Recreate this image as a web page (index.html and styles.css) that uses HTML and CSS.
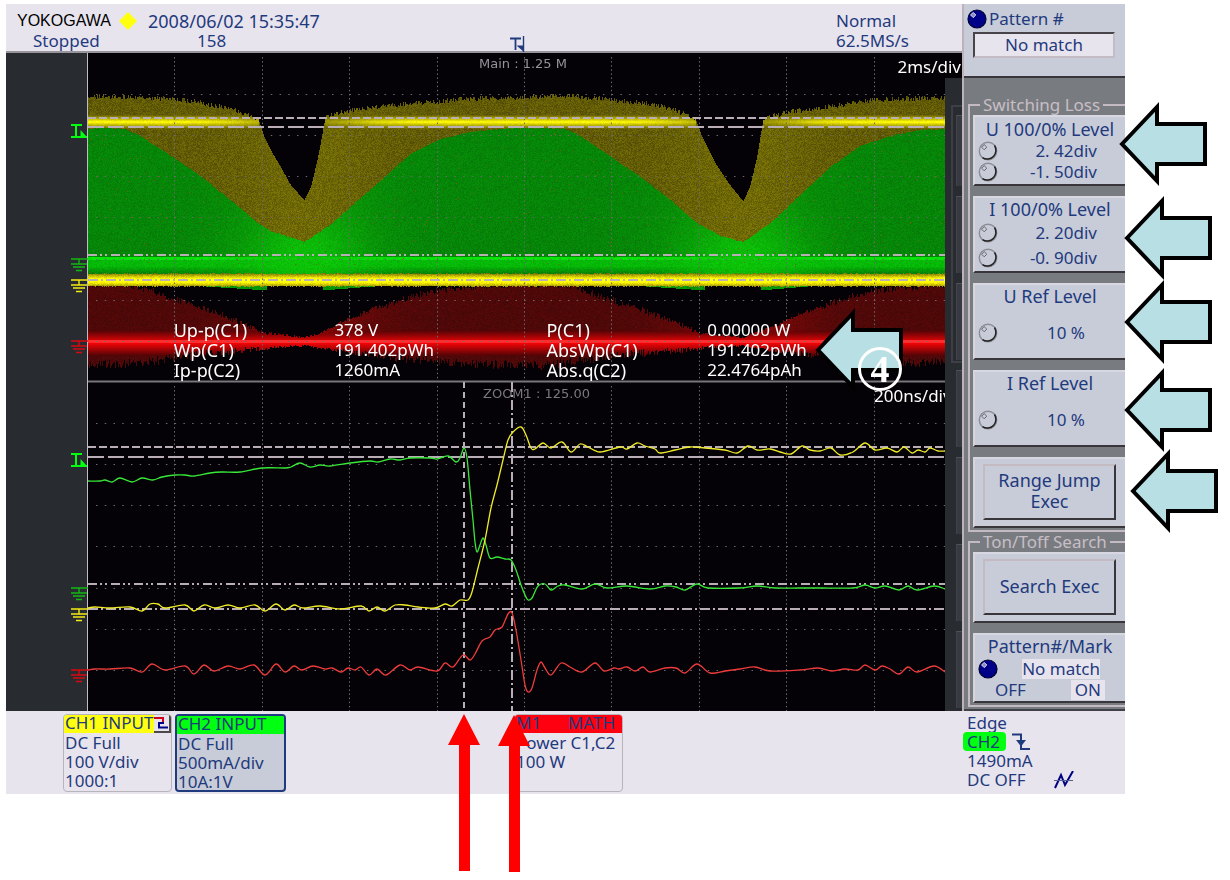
FILE: index.html
```html
<!DOCTYPE html>
<html lang="en">
<head>
<meta charset="utf-8">
<title>YOKOGAWA – Switching Loss</title>
<link rel="stylesheet" href="styles.css">
</head>
<body>
<svg class="defs" aria-hidden="true">
  <symbol id="callout" viewBox="0 0 88 86" overflow="visible">
    <polygon points="2,43 37,6 37,23 85,23 85,63 37,63 37,80" fill="#b8e0e4" stroke="#000" stroke-width="4" stroke-miterlimit="8"/>
  </symbol>
  <symbol id="knob" viewBox="0 0 20 20">
    <circle cx="10" cy="10" r="8.7" fill="none" stroke="#8c8c94" stroke-width="1.4"/>
    <path d="M16.5 4.500A8.700 8.700 0 0 1 4.500 16.600" fill="none" stroke="#222" stroke-width="1.500"/>
    <path d="M6.200 3.600L8.800 6.200L6.200 8.800L3.600 6.200Z" fill="none" stroke="#66666e" stroke-width="1"/>
  </symbol>
  <symbol id="ball" viewBox="0 0 20 20">
    <circle cx="10" cy="10" r="9" fill="#000088" stroke="#000030" stroke-width="1.200"/>
    <path d="M6.200 3.400L8.800 6L6.200 8.600L3.600 6Z" fill="#8c8cc0" stroke="#e0e0f4" stroke-width="1"/>
  </symbol>
  <symbol id="ground" viewBox="0 0 18 14">
    <path d="M1 1H18M9 1V6M1 6H17M3 9H15M6 12.500H12" fill="none" stroke="currentColor" stroke-width="1.400"/>
  </symbol>
  <symbol id="trigger" viewBox="0 0 18 14">
    <path d="M1 1H12M1 13H17M6 1V13" fill="none" stroke="currentColor" stroke-width="2"/>
    <path d="M10.500 6L17 13H10.500Z" fill="currentColor"/>
  </symbol>
</svg>

<main class="page">
  <div class="device">
    <div class="upper">
      <section class="left">
        <header class="status">
          <div class="brand">
            <span class="logo">YOKOGAWA</span>
            <svg class="diamond" viewBox="0 0 18 18"><path d="M9 0L18 9L9 18L0 9Z" fill="#ffff10"/></svg>
            <time>2008/06/02 15:35:47</time>
          </div>
          <div class="state"><span class="run">Stopped</span><span>158</span></div>
          <div class="mode">Normal<br>62.5MS/s</div>
          <svg class="tmark" viewBox="0 0 15 16"><path d="M0 2.500H11M5.500 2V14" fill="none" stroke="#1f3a7d" stroke-width="1.800"/><path d="M13.500 0V16" stroke="#1f3a7d" stroke-width="1.400"/><path d="M6.500 9.500H14V16Z" fill="#1f3a7d"/></svg>
        </header>
        <div class="scope">
          <svg class="gutter" viewBox="6 53 82 658" preserveAspectRatio="xMaxYMin meet">
            <path d="M87.500 53V711" stroke="#c0bcc4"/>
            <g color="#00ff10"><use href="#trigger" x="70" y="124" width="18" height="14"/><use href="#trigger" x="70" y="453" width="18" height="14"/></g>
            <g color="#10b810"><use href="#ground" x="70" y="258" width="18" height="14"/><use href="#ground" x="70" y="587" width="18" height="14"/></g>
            <g color="#f4ec10"><use href="#ground" x="70" y="279" width="18" height="14"/><use href="#ground" x="70" y="608" width="18" height="14"/></g>
            <g color="#d80810"><use href="#ground" x="70" y="340" width="18" height="14"/><use href="#ground" x="70" y="669" width="18" height="14"/></g>
          </svg>
          <div class="plot">
            <canvas id="density" width="857" height="329"></canvas>
            <svg class="traces" viewBox="88 53 857 658" preserveAspectRatio="none">
              <g id="grid" fill="none" stroke="#6c686e" stroke-width="1"></g>
              <path d="M88 381.500H945" stroke="#78767a" stroke-width="2"/>
              <g id="cursors" fill="none" stroke="#b9aeb6" stroke-width="2">
                <path class="short" d="M88 118H945M88 447H945"/>
                <path class="long" d="M88 127H945M88 457H945"/>
                <path class="dashdotdot" d="M88 255H945M88 584H945"/>
                <path class="dashdot" d="M88 280H945M88 609H945"/>
                <path class="vshort" d="M464 382V711"/>
                <path class="dashdot" d="M512 382V711"/>
              </g>
              <g fill="none" stroke-width="1.300">
                <path id="green" stroke="#38e838"/>
                <path id="yellow" stroke="#f0ec28"/>
                <path id="red" stroke="#ee3c3c"/>
              </g>
            </svg>
            <span class="caption main-cap">Main : 1.25 M</span>
            <span class="caption zoom-cap">ZOOM1 : 125.00</span>
            <span class="scale zoom-scale">200ns/div</span>
            <table class="readouts">
              <tr><th>Up-p(C1)</th><td>378 V</td><th>P(C1)</th><td>0.00000 W</td></tr>
              <tr><th>Wp(C1)</th><td>191.402pWh</td><th>AbsWp(C1)</th><td>191.402pWh</td></tr>
              <tr><th>Ip-p(C2)</th><td>1260mA</td><th>Abs.q(C2)</th><td>22.4764pAh</td></tr>
            </table>
          </div>
          <div class="strip">
            <i class="outline"></i>
            <i class="shade first"></i><i class="shade"></i><i class="shade"></i><i class="shade"></i><i class="shade"></i><i class="shade"></i><i class="shade"></i>
          </div>
          <span class="scale main-scale">2ms/div</span>
        </div>
      </section>

      <aside class="menu">
        <div class="pattern">
          <label for="pattern"><svg class="knob"><use href="#ball"/></svg>Pattern #</label>
          <input id="pattern" value="No match" readonly>
        </div>
        <div class="softkeys">
          <fieldset>
            <legend>Switching Loss</legend>
            <button class="key tight"><b>U 100/0% Level</b><span class="row"><svg class="knob"><use href="#knob"/></svg><span>2. 42div</span></span><span class="row"><svg class="knob"><use href="#knob"/></svg><span>-1. 50div</span></span></button>
            <button class="key"><b>I 100/0% Level</b><span class="row"><svg class="knob"><use href="#knob"/></svg><span>2. 20div</span></span><span class="row"><svg class="knob"><use href="#knob"/></svg><span>-0. 90div</span></span></button>
            <button class="key ref"><b>U Ref Level</b><span class="row"><svg class="knob"><use href="#knob"/></svg><span>10 %</span></span></button>
            <button class="key ref"><b>I Ref Level</b><span class="row"><svg class="knob"><use href="#knob"/></svg><span>10 %</span></span></button>
            <div class="key exec"><button>Range Jump<br>Exec</button></div>
          </fieldset>
          <fieldset>
            <legend>Ton/Toff Search</legend>
            <div class="key exec"><button>Search Exec</button></div>
            <button class="key mark"><b>Pattern#/Mark</b><span class="row"><svg class="knob"><use href="#ball"/></svg><span class="lit">No match</span></span><span class="toggle"><span>OFF</span><span class="lit on">ON</span></span></button>
          </fieldset>
        </div>
      </aside>
    </div>

    <footer class="channels">
      <article class="channel ch1">
        <h2>CH1 INPUT<svg class="edge" viewBox="0 0 17 18"><rect width="17" height="18" fill="#4c484c"/><rect width="15" height="16" fill="#e8e4ee"/><path d="M0 3H9V7" fill="none" stroke="#d00018" stroke-width="2"/><path d="M5 8V12.500H14M4 8H10" fill="none" stroke="#000088" stroke-width="2"/></svg></h2>
        <p>DC Full<br>100 V/div<br>1000:1</p>
      </article>
      <article class="channel ch2">
        <h2>CH2 INPUT</h2>
        <p>DC Full<br>500mA/div<br>10A:1V</p>
      </article>
      <article class="channel math">
        <h2><span>M1</span><span>MATH</span></h2>
        <p>Power C1,C2<br>100 W</p>
      </article>
      <div class="trig">
        <span>Edge</span>
        <span class="source"><mark>CH2</mark><svg class="fall" viewBox="0 0 18 18"><path d="M0 1.500H9V16H18" fill="none" stroke="#1f3a7d" stroke-width="2"/><path d="M4 7H14L9 13.500Z" fill="#1f3a7d"/></svg></span>
        <span>1490mA</span>
        <span class="source">DC OFF<svg class="hf" viewBox="0 0 20 18"><path d="M1 17L7 4L11 14L19 0" fill="none" stroke="#000080" stroke-width="2"/><path d="M0 9.500H19" stroke="#506090" stroke-width="1"/></svg></span>
      </div>
    </footer>
  </div>

  <svg class="callout a1"><use href="#callout"/></svg>
  <svg class="callout a2"><use href="#callout"/></svg>
  <svg class="callout a3"><use href="#callout"/></svg>
  <svg class="callout a4"><use href="#callout"/></svg>
  <svg class="callout a5"><use href="#callout"/></svg>
  <svg class="callout a6"><use href="#callout"/></svg>
  <span class="number">4</span>
  <svg class="pointer p1" viewBox="0 0 32 157"><path d="M16 0L32 31H22V157H11V31H0Z" fill="#ff0000"/></svg>
  <svg class="pointer p2" viewBox="0 0 32 157"><path d="M16 0L32 31H22V157H11V31H0Z" fill="#ff0000"/></svg>
</main>
<script src="scope.js"></script>
</body>
</html>
```
FILE: styles.css
```css
* { box-sizing: border-box; }
body { margin: 0; background: #fff; color: #1f3a7d; font: 17px/20px "Noto Sans", sans-serif; }
button, input { font: inherit; color: inherit; }
.defs { position: absolute; width: 0; height: 0; }
.page { position: relative; padding: 4px 105px 86px 6px; min-width: 1000px; }
.device { background: #e8e4ee; }
.upper { display: flex; }
.left { flex: 1; min-width: 0; }

.status { position: relative; height: 49px; padding: 7px 0 0 11px; border-bottom: 2px solid #97949c; }
.brand { display: flex; align-items: center; height: 20px; }
.brand time { font-size: 18px; }
.logo { color: #000; font: 16px/20px "Liberation Sans", sans-serif; width: 102px; }
.diamond { width: 18px; height: 18px; margin-right: 11px; }
.state { display: flex; padding-left: 16px; }
.run { width: 164px; }
.mode { position: absolute; top: 7px; right: 50px; width: 76px; }
.tmark { position: absolute; top: 32px; left: 504px; width: 15px; height: 16px; }

.scope { position: relative; display: flex; height: 658px; background: #040206; }
.gutter { flex: none; width: 82px; height: 658px; background: #282c30; }
.plot { position: relative; flex: 1; min-width: 0; overflow: hidden; }
#density { position: absolute; width: 100%; height: 329px; }
.traces { position: absolute; width: 100%; height: 658px; }
.short { stroke-dasharray: 8 3; }
.long { stroke-dasharray: 16 4; }
.dashdotdot { stroke-dasharray: 9 3 2 3 2 4; }
.dashdot { stroke-dasharray: 10 3 2 3; }
.vshort { stroke-dasharray: 6 4; }
.caption { position: absolute; left: 0; right: 0; text-align: center; color: #96929a; font: 13px/16px "DejaVu Sans", sans-serif; }
.main-cap { top: 3px; padding-left: 13px; }
.zoom-cap { top: 333px; padding-left: 40px; color: #7c787e; }
.scale { position: absolute; color: #fff; white-space: nowrap; }
.main-scale { top: 4px; right: 1px; }
.zoom-scale { top: 333px; left: calc(100% - 71px); }
.readouts { position: absolute; top: 267px; left: 10%; width: 75%; border-collapse: collapse; table-layout: fixed; color: #fff; line-height: 20px; }
.readouts th, .readouts td { padding: 0; height: 20px; text-align: left; font-weight: 400; white-space: nowrap; }
.readouts th { width: 25%; font-size: 18px; }
.readouts td { width: 33%; }
.readouts th + td:last-child { width: 17%; }

.strip { position: relative; width: 17px; margin-top: 25px; background: #282c30; display: flex; flex-direction: column; align-items: flex-end; gap: 10px; overflow: hidden; }
.shade { width: 6px; height: 77px; background: #383a42; border-top: 1px solid #505058; border-left: 1px solid #44424a; }
.first { height: 71px; margin-top: 37px; }
.outline { position: absolute; left: 6px; right: 0; top: 27px; height: 258px; border: 2px solid #3e3e46; border-right: 0; }

.menu { width: 163px; display: flex; flex-direction: column; border-left: 2px solid #bcb2ba; }
.pattern { height: 74px; padding: 5px 9px 0 3px; background: #c8ccd8; border-bottom: 2px solid #38363a; }
.pattern label { display: flex; align-items: center; gap: 2px; }
.pattern input { display: block; width: 142px; height: 26px; margin: 3px 0 0 6px; padding: 0 0 2px; text-align: center; background: #e8e4ee; border: 2px solid; border-color: #48444a #c4bcc4 #c4bcc4 #48444a; border-radius: 0; }
.knob { flex: none; width: 20px; height: 20px; }
.softkeys { flex: 1; padding: 17px 0 0 4px; background: #787c80; border-bottom: 2px solid #404046; }
fieldset { display: flex; flex-direction: column; gap: 10px; min-width: 0; margin: 0; padding: 0 0 2px 3px; border: 2px solid #c4bac2; border-right: 0; }
legend { margin-left: 7px; padding: 0 3px; line-height: 20px; color: #c8bec6; }
.key { display: block; width: 100%; height: 77px; padding: 0; background: #c8ccd8; border: 2px solid; border-color: #d8d8e2 #c8ccd8 #38363a #d8d4dc; border-width: 2px 0 2px 2px; border-radius: 0; text-align: center; white-space: nowrap; }
.key b { display: block; height: 22px; font-size: 18px; font-weight: 400; line-height: 20px; }
.row { display: flex; align-items: center; justify-content: space-between; height: 25px; padding: 0 28px 0 3px; }
.tight { height: 71px; }
.tight .row { height: 21px; }
.ref .row { height: 50px; padding-right: 40px; }
.exec { height: 71px; padding: 5px 9px 6px 8px; }
.exec button { width: 100%; height: 56px; padding: 0 0 2px; font-size: 18px; line-height: 21px; background: #c8ccd8; border: 2px solid; border-color: #c4bac2 #38363a #38363a #c4bac2; border-radius: 0; }
.mark { height: 70px; }
.mark .row { height: 22px; padding-right: 25px; }
.lit { background: #e8e4ee; }
.toggle { display: flex; justify-content: space-between; padding: 0 20px; }
.on { padding: 0 4px; }

.channels { position: relative; display: flex; align-items: flex-start; gap: 3px; height: 83px; padding: 3px 0 0 57px; line-height: 19px; }
.channel { width: 109px; height: 78px; border: 1px solid #b8b4bc; border-radius: 4px; overflow: hidden; white-space: nowrap; }
.channel h2 { display: flex; margin: 0; padding-left: 1px; height: 18px; font: inherit; line-height: 16px; }
.channel p { margin: 0; padding-left: 1px; }
.ch1 h2 { background: #ffff10; justify-content: space-between; }
.edge { width: 17px; height: 18px; }
.ch2 { width: 111px; background: #c8ccd8; border: 2px solid #1f3a7d; }
.ch2 h2 { background: #00ff10; }
.math { margin-left: 225px; }
.math h2 { background: #ff0010; justify-content: space-between; padding-right: 7px; }
.trig { position: absolute; top: 2px; right: 50px; width: 112px; display: flex; flex-direction: column; padding-left: 4px; white-space: nowrap; }
.source { display: flex; align-items: center; }
.trig mark { width: 43px; height: 19px; margin: 0 6px 0 -4px; padding-left: 4px; border-radius: 4px; background: #00ff10; color: inherit; }
.fall { width: 18px; height: 18px; }
.hf { flex: none; width: 20px; height: 18px; margin-left: 28px; }

.callout { position: absolute; width: 88px; height: 86px; overflow: visible; }
.a1 { right: 22px; top: 101px; }
.a2 { right: 17px; top: 195px; }
.a3 { right: 17px; top: 279px; }
.a4 { right: 17px; top: 367px; }
.a5 { right: 11px; top: 448px; }
.a6 { right: 326px; top: 307px; }
.number { position: absolute; right: 328px; top: 347px; width: 44px; height: 44px; border: 3px solid #fff; border-radius: 50%; color: #fff; font: bold 38px/38px "Liberation Serif", serif; text-align: center; }
.pointer { position: absolute; width: 32px; height: 157px; }
.p1 { left: 448px; top: 714px; }
.p2 { left: 498px; top: 715px; }
```
FILE: scope.js
```js
// Seeded generator so the persistence texture is stable between loads.
let seed = 20080602;
function rnd() {
  seed = (seed * 1664525 + 1013904223) >>> 0;
  return seed / 4294967296;
}

function at(points, x) {
  for (let i = 1; i < points.length; i++) {
    if (x <= points[i][0]) {
      const a = points[i - 1], b = points[i];
      return a[1] + (b[1] - a[1]) * (x - a[0]) / (b[0] - a[0]);
    }
  }
  return points[points.length - 1][1];
}

const olive = [[88,96],[150,97],[175,99],[200,102],[230,108],[258,118],[264,137],[270,149],[280,166],[290,184],[304,200],[311,185],[318,155],[325,117],[340,112],[370,107],[400,104],[437,101],[470,98],[520,97],[560,95],[590,97],[640,102],[670,108],[695,118],[702,137],[715,163],[730,185],[743,201],[750,185],[757,155],[763,118],[790,111],[830,106],[870,100],[900,98],[945,97]];
const greenTop = [[88,128],[100,127],[125,128],[140,135],[175,158],[200,175],[230,199],[255,220],[270,230],[304,241],[330,224],[350,206],[380,180],[410,153],[440,138],[470,131],[500,128],[540,127],[565,128],[580,135],[612,157],[640,176],[670,199],[695,221],[720,235],[743,241],[770,222],[800,194],[830,166],[860,145],[890,135],[920,129],[945,128]];
const redTop = [[88,283],[130,284],[150,290],[175,299],[210,310],[240,322],[262,332],[304,337],[320,333],[340,322],[370,310],[400,300],[430,291],[460,288],[490,285],[565,284],[590,292],[612,300],[640,309],[680,324],[700,333],[743,337],[770,327],[800,314],[830,303],[860,293],[900,287],[945,284]];
const redBottom = [[88,364],[140,363],[175,357],[200,354],[240,350],[270,347],[304,345],[330,349],[370,354],[400,358],[430,360],[460,363],[540,365],[580,360],[620,354],[680,350],[710,347],[743,345],[770,350],[810,354],[850,359],[900,362],[945,362]];

function density() {
  const canvas = document.getElementById('density');
  const ctx = canvas.getContext('2d');
  const img = ctx.createImageData(857, 329);
  for (let i = 0; i < 857; i++) {
    const x = i + 88;
    const phase = Math.min(Math.abs(x - 304), Math.abs(x - 743));
    const dip = Math.exp(-(phase * phase) / 4200);
    const inNotch = (x > 258 && x < 325) || (x > 695 && x < 763);
    const o = at(olive, x) + (inNotch ? 0 : (rnd() - 0.5) * 5);
    const g = at(greenTop, x) + rnd();
    const rt = at(redTop, x) + (rnd() - 0.5) * (7 - dip * 5);
    const rb = at(redBottom, x) + (rnd() - 0.5) * (9 - dip * 7);
    const edge = rnd() * 3;
    const bump = (x > 190 && x < 267) ? 285 + (x - 190) / 77 * 5 : (x > 322 && x < 385) ? 290 - (x - 322) / 63 * 5
      : (x > 630 && x < 705) ? 285 + (x - 630) / 75 * 5 : (x > 760 && x < 820) ? 290 - (x - 760) / 60 * 5 : 0;
    for (let j = 0; j < 329; j++) {
      const y = j + 53;
      const n = rnd() - 0.5;
      let c = [4, 2, 6];
      if (y >= 274 - edge / 2 && y < 285 + edge / 2) {
        const k = Math.max(0, 1 - Math.abs(y - 280) / 7);
        c = [130 + 180 * k + n * 40, 120 + 180 * k + n * 40, 5];
      } else if (y >= 284 && y < bump) {
        c = [8, 150 + n * 40, 8];
      } else if (y >= g && y < 276) {
        let v = 133 + dip * 26 + Math.max(0, Math.min(1, (y - 205) / 40)) * dip * 28 + n * 24;
        if (y > 256) {
          v += (y < 260 ? 95 : y < 267 ? 52 : Math.max(0, 40 - (y - 267) * 7)) * (1 - dip * 0.85);
        }
        c = [6 + dip * 6, v, 8];
        if (rnd() < 0.003) c = [110, 100, 10];
      } else if (y >= o && y < 245) {
        c = [98 + n * 34 + dip * 14, 91 + n * 34 + dip * 14, 6];
        if (!inNotch && y > 114 && y < 129) {
          const k = Math.max(0, 1 - Math.abs(y - 121.5) / 7) * (1 - dip * 0.7);
          c = [98 + 165 * k + n * 20, 91 + 165 * k + n * 20, 6];
        }
      } else if (y > rt && y < rb && y > 284) {
        const d = Math.abs(y - 342.5);
        const base = 78 + dip * 55 + n * 26;
        if (y >= 340 && y <= 342) c = [255, 45, 45];
        else if (d < 13) c = [Math.max(base, 245 - d * 13), 4, 6];
        else c = [base, 8, 8];
      }
      const p = (j * 857 + i) * 4;
      img.data[p] = c[0]; img.data[p + 1] = c[1]; img.data[p + 2] = c[2]; img.data[p + 3] = 255;
    }
  }
  ctx.putImageData(img, 0, 0);
}

function grid() {
  let v = '', h = '';
  for (let k = 1; k < 10; k++) {
    const x = Math.round(88 + k * 87.4) - 0.5;
    v += `M${x} 57V380M${x} 386V711`;
  }
  for (const top of [53, 382]) {
    for (let k = 1; k < 8; k++) h += `M96 ${Math.round(top + k * 41.1) + 0.5}H945`;
  }
  const g = document.getElementById('grid');
  g.innerHTML = `<path d="${v}" stroke-dasharray="1.500 2.600"/><path d="${h}" stroke-dasharray="1.500 7.240"/>`;
}

function smooth(id, text) {
  const p = text.split(' ').map(s => s.split(',').map(Number));
  let d = `M${p[0]}`;
  for (let i = 1; i < p.length; i++) {
    const a = p[Math.max(0, i - 2)], b = p[i - 1], c = p[i], e = p[Math.min(p.length - 1, i + 1)];
    d += `C${b[0] + (c[0] - a[0]) / 6} ${b[1] + (c[1] - a[1]) / 6} ${c[0] - (e[0] - b[0]) / 6} ${c[1] - (e[1] - b[1]) / 6} ${c[0]} ${c[1]}`;
  }
  document.getElementById(id).setAttribute('d', d);
}

density();
grid();
smooth('green', '88,481 100,481 105,480 112,482 120,478 132,482 142,478 153,480 162,477 175,475 185,475 194,476 210,473 222,472 240,472 262,468 285,468 291,467 300,463 310,467 320,465 330,466 350,463 370,461 378,462 390,459 400,460 410,458 430,458 437,459 448,456 456,462 460,458 464,448 467,458 470,490 473,520 475,542 477,552 480,545 483,538 486,545 490,558 497,557 505,559 511,560 516,570 521,585 525,595 528,600 532,598 538,586 545,584 551,590 558,586 565,585 582,589 595,584 607,588 627,586 650,589 665,586 676,587 685,590 697,584 708,588 740,588 757,586 775,588 800,588 820,588 853,588 865,585 875,588 885,586 899,590 908,586 917,590 934,586 945,589');
smooth('yellow', '88,608 95,607 110,608 130,607 142,611 150,604 158,604 165,608 185,605 194,611 204,605 215,608 228,605 240,608 255,605 265,611 276,604 285,610 294,605 303,608 320,606 340,609 361,606 369,611 377,607 385,611 395,605 405,605 418,607 435,608 445,604 452,606 460,600 468,600 472,592 478,568 485,540 491,508 497,485 503,460 508,440 513,432 521,427 526,435 531,448 535,449 543,443 551,448 562,442 571,452 580,444 588,447 600,452 620,447 627,449 637,443 645,446 655,449 660,453 675,450 690,447 705,448 725,450 737,453 748,446 757,450 770,449 780,452 791,454 802,446 810,450 820,451 831,448 840,455 853,452 865,443 875,450 887,448 897,452 904,447 912,453 918,450 925,452 930,448 938,451 945,451');
smooth('red', '88,670 95,669 110,669 130,668 142,672 152,664 165,670 185,666 194,674 204,665 214,671 228,666 240,669 254,665 265,675 276,664 285,672 294,666 302,670 313,666 325,669 332,668 341,672 348,668 355,670 361,667 369,675 377,669 386,675 400,665 410,670 418,667 437,671 445,663 453,667 463,655 470,660 475,654 482,641 490,637 495,630 502,627 508,614 512,613 516,630 521,660 525,685 528,692 532,688 537,670 541,662 545,668 551,675 561,663 570,667 582,672 595,663 604,671 614,668 619,669 627,667 635,671 643,667 650,672 665,668 676,668 685,673 697,664 710,673 725,671 740,669 755,667 770,671 800,670 818,668 832,671 845,669 858,670 865,665 875,670 882,666 890,669 899,674 908,667 917,672 934,666 945,672');
```
